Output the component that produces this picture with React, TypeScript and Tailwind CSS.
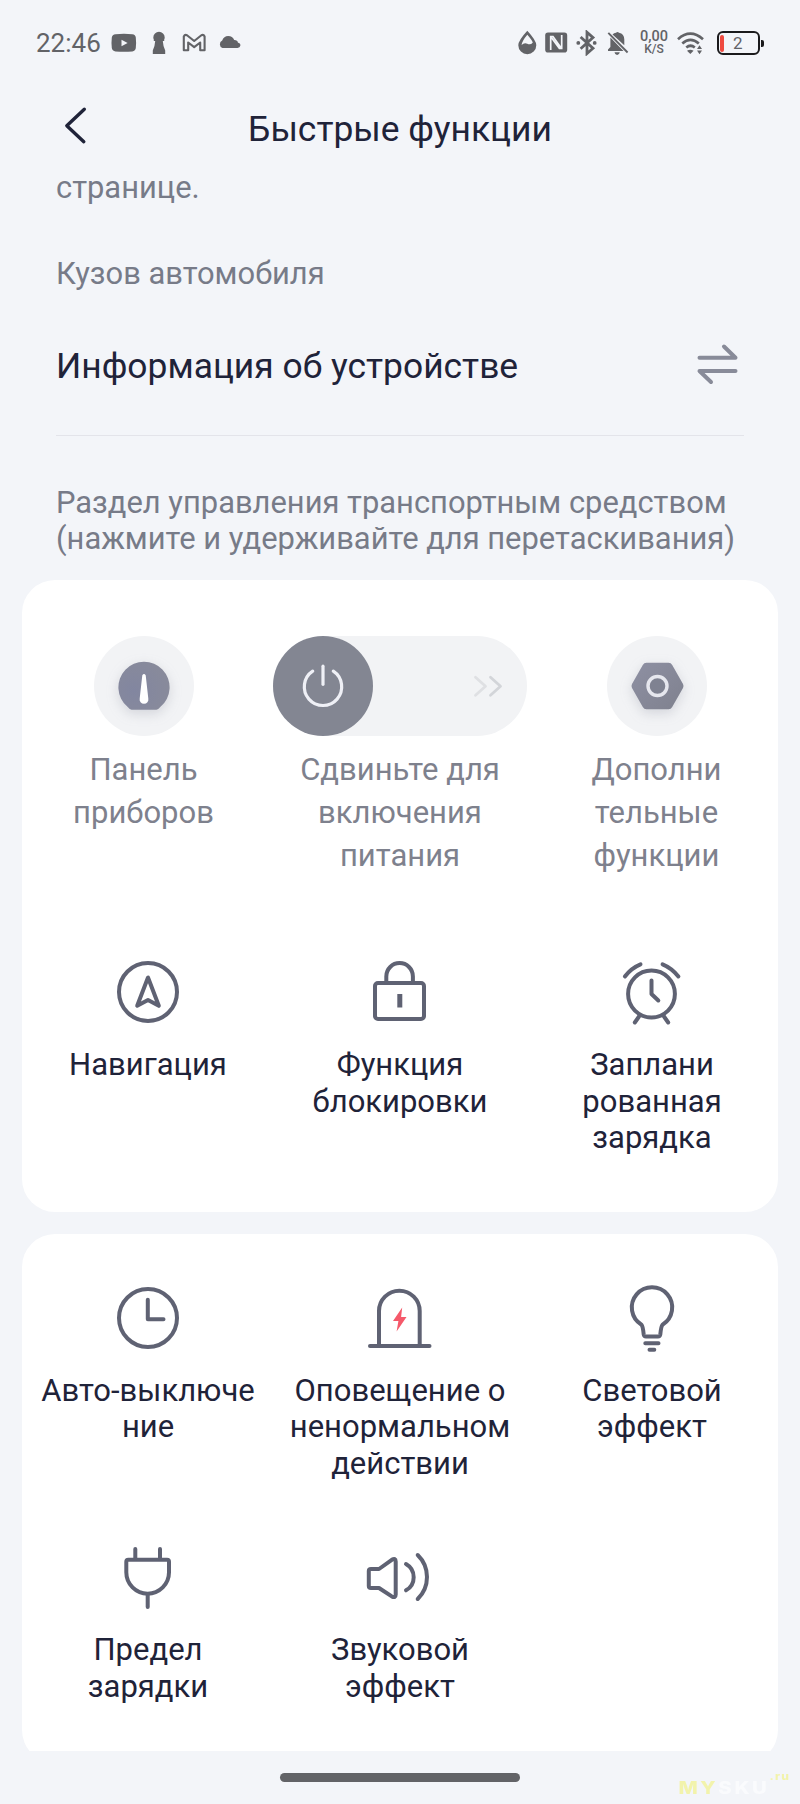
import { ReactNode } from 'react'

type Feature = { icon: ReactNode; lines: string[] }

function Glyph({ children }: { children: ReactNode }) {
  return (
    <svg className="w-16 h-16 overflow-visible" viewBox="0 0 64 64" fill="none" stroke="#5f6273" strokeWidth="4" strokeLinecap="round" strokeLinejoin="round">
      {children}
    </svg>
  )
}

const control: Feature[] = [
  {
    icon: (
      <Glyph>
        <circle cx="32" cy="32" r="29" />
        <path d="M32 17.5L21.2 45.8L32 40L42.8 45.8Z" />
      </Glyph>
    ),
    lines: ['Навигация'],
  },
  {
    icon: (
      <Glyph>
        <rect x="7" y="23" width="49" height="36" rx="3" />
        <path d="M18.3 22v-5.6a13.2 13.2 0 0 1 26.6 0V22" />
        <path d="M31.8 36.5v8.5" strokeWidth="5" strokeLinecap="square" strokeLinejoin="miter" />
      </Glyph>
    ),
    lines: ['Функция', 'блокировки'],
  },
  {
    icon: (
      <Glyph>
        <circle cx="31.5" cy="34" r="23.4" />
        <path d="M31.5 20.5V34l6.8 6.5" />
        <path d="M4.9 16.5Q11 8.2 20.5 4.3M42.6 4.3Q52 8.2 58.4 16.5" />
        <path d="M19 56.5l-4.2 6M44 56.5l4.2 6" />
      </Glyph>
    ),
    lines: ['Заплани', 'рованная', 'зарядка'],
  },
]

const extra: Feature[] = [
  {
    icon: (
      <Glyph>
        <circle cx="32" cy="32" r="29" />
        <path d="M31.8 13.8V33.3H47.5" />
      </Glyph>
    ),
    lines: ['Авто-выключе', 'ние'],
  },
  {
    icon: (
      <Glyph>
        <path d="M11 60V25a20.35 20.35 0 0 1 40.7 0V60" />
        <path d="M2 60H61.5" />
        <path d="M34.2 21.5L25 35h5.4l-1.8 10.5L38.5 31h-5.4z" fill="#f5596a" stroke="none" />
      </Glyph>
    ),
    lines: ['Оповещение о', 'ненормальном', 'действии'],
  },
  {
    icon: (
      <Glyph>
        <path d="M21.5 38.7A20.2 20.2 0 1 1 42.5 38.7C41 40.5 40.8 43 40.3 48.5Q40 50.5 38 50.5H26Q24 50.5 23.7 48.5C23.2 43 23 40.5 21.5 38.7Z" />
        <path d="M25.3 57.3H38.5M29.5 63.8H34.3" />
      </Glyph>
    ),
    lines: ['Световой', 'эффект'],
  },
  {
    icon: (
      <Glyph>
        <path d="M12.3 14.7H51a2 2 0 0 1 2 2V27.3a21.35 21.35 0 0 1-42.7 0V16.7a2 2 0 0 1 2-2Z" />
        <path d="M19.3 4V14M44 4V14M31.7 49V62" />
      </Glyph>
    ),
    lines: ['Предел', 'зарядки'],
  },
  {
    icon: (
      <Glyph>
        <path d="M3 24H11L23.8 14.8Q27.7 12.4 27.7 16.5V49.5Q27.7 53.5 23.8 51.4L11 43H3Q.8 43 .8 41V26Q.8 24 3 24Z" />
        <path d="M38 19a15.1 15.1 0 0 1 0 26.3M49.7 10a30.7 30.7 0 0 1 0 44" />
      </Glyph>
    ),
    lines: ['Звуковой', 'эффект'],
  },
]

function FeatureCell({ icon, lines }: Feature) {
  return (
    <div className="flex flex-col items-center">
      {icon}
      <div className="mt-[23px] text-center text-[31px] leading-[36.5px] text-[#1f2339]">
        {lines.map((line) => (
          <div key={line} className="whitespace-nowrap">{line}</div>
        ))}
      </div>
    </div>
  )
}

function TopLabel({ lines }: { lines: string[] }) {
  return (
    <div className="mt-[12px] text-center text-[31px] leading-[43px] text-[#7e818d]">
      {lines.map((line) => (
        <div key={line}>{line}</div>
      ))}
    </div>
  )
}

function StatusBar() {
  return (
    <div className="flex h-[86px] items-center pl-9 pr-9 text-[#626367]">
      <span className="w-[75px] text-[26px] leading-none">22:46</span>
      <svg className="h-[26px] w-[26px]" viewBox="0 0 26 26" fill="currentColor">
        <path fillRule="evenodd" d="M4.5 4.3Q13 3.3 21.3 4.3Q24.5 4.6 24.8 7.5Q25.4 13 24.8 18Q24.5 21 21.3 21.4Q13 22.2 4.5 21.4Q1.2 21 .8 18Q.2 13 .8 7.5Q1.2 4.6 4.5 4.3ZM10.5 9.8V16.2L16.6 13Z" />
      </svg>
      <svg className="ml-[15px] h-[26px] w-[14px]" viewBox="0 0 14 26" fill="currentColor">
        <path d="M7 1.8a5.7 5.7 0 0 1 5.7 5.7q0 1-.5 2V11H10.8q.4 6 2.4 9.5V24H.8V20.5Q2.8 17 3.2 11H1.8V9.5q-.5-1-.5-2A5.7 5.7 0 0 1 7 1.8Z" />
      </svg>
      <svg className="ml-[16px] h-[26px] w-[24px]" viewBox="0 0 24 26" fill="none" stroke="currentColor" strokeWidth="2.1" strokeLinejoin="round">
        <path d="M1.8 6.5Q2.8 4.3 5 5.2L12.2 11L19.4 5.2Q21.6 4.3 22.6 6.5V20.2H18.2V12.5L12.2 17.2L6.2 12.5V20.2H1.8Z" />
      </svg>
      <svg className="ml-[12px] h-[26px] w-[23px]" viewBox="0 0 23 26" fill="currentColor">
        <path d="M4.5 18A4 4 0 0 1 4.2 10.6Q5.8 6 10.2 6Q14.6 6 16.2 10Q19.5 9.9 20 12.8Q22.6 13.2 22.4 15.6Q22 18 19.5 18Z" />
      </svg>
      <div className="grow" />
      <svg className="h-[26px] w-[19px]" viewBox="0 0 19 26" fill="currentColor">
        <path fillRule="evenodd" d="M9.3 .8Q18.3 10.5 18.3 15.3A9 8.9 0 0 1 .3 15.3Q.3 10.5 9.3 .8ZM9.3 4.8Q4 11 3.6 15Q6.3 12.3 9.3 13.8Q12.5 15.4 14.8 12.5Q13.5 9.5 9.3 4.8Z" />
      </svg>
      <svg className="ml-[8px] h-[26px] w-[23px]" viewBox="0 0 23 26">
        <rect x=".2" y="2.6" width="22" height="20" rx="2.8" fill="currentColor" />
        <path d="M5.7 20V6.5H8L16.5 18.5M16.7 5V18.3H14.4L6 7" fill="none" stroke="#f3f5f9" strokeWidth="1.7" />
      </svg>
      <svg className="ml-[8px] h-[26px] w-[22px]" viewBox="0 0 22 26" fill="none" stroke="currentColor" strokeWidth="2.8">
        <path d="M4.6 7L17 18.2L11 23.5V2.3L17 7.6L4.6 18.8" />
        <circle cx="2.3" cy="12.9" r="1.9" fill="currentColor" stroke="none" />
        <circle cx="18.7" cy="12.9" r="1.9" fill="currentColor" stroke="none" />
      </svg>
      <svg className="ml-[9px] h-[26px] w-[22px]" viewBox="0 0 22 26" fill="currentColor">
        <path d="M5.5 4.5Q7 3 9 2.8Q10.5 1.3 12 2.8Q17.3 4 17.3 9.5V15.2Z" />
        <path d="M3.4 7.5L16.5 21H1V19.5L3.4 17Z" />
        <path d="M1.3 2.8L20.6 22.5" fill="none" stroke="currentColor" strokeWidth="1.9" />
        <path d="M7.5 22.3H12.8Q12.3 25 10.1 25Q8 25 7.5 22.3Z" />
      </svg>
      <div className="ml-[8px] flex w-[34px] flex-col items-center font-medium">
        <span className="text-[14.5px] leading-[13px]">0,00</span>
        <span className="text-[12px] leading-[13px]">K/S</span>
      </div>
      <svg className="ml-[6px] h-[26px] w-[28px]" viewBox="0 0 28 26" fill="none" stroke="currentColor" strokeWidth="2.7">
        <path d="M1 9.2Q13.3-1.8 26 9.2M5.3 13.5Q13.4 6.2 21.8 13.5M9.3 17.5Q13.5 14 17.8 17.5" />
        <path d="M10 20.8Q13.3 18.6 16.6 20.8L13.3 24Z" fill="currentColor" stroke="none" />
        <path d="M22.5 15.3L25 19H20ZM22.5 24.3L25 20.6H20Z" fill="currentColor" stroke="none" />
      </svg>
      <div className="ml-[12px] flex h-6 w-[43px] items-center rounded-[6px] border-2 border-[#1a1a1c] pl-[1px]">
        <div className="h-[17px] w-1 rounded-[2px] bg-[#ef4a40]" />
        <span className="ml-[9px] text-[17px] leading-none">2</span>
      </div>
      <div className="ml-px h-[7px] w-[3px] rounded-r-[2px] bg-[#1a1a1c]" />
    </div>
  )
}

function Dashboard() {
  return (
    <div className="flex flex-col items-center">
      <div className="h-[100px] w-[100px] rounded-full bg-[#f2f3f5]">
        <svg className="drop-shadow-[0_4px_6px_rgba(133,136,155,0.28)]" viewBox="0 0 100 100">
          <defs>
            <radialGradient id="dial" cx="0.3" cy="0.6" r="0.8">
              <stop offset="0" stopColor="#8286a0" />
              <stop offset="1" stopColor="#898b9a" />
            </radialGradient>
          </defs>
          <path d="M37.5 73.7Q35.8 73.7 33.5 70.8A25.6 25.6 0 1 1 66.5 70.8Q64.2 73.7 62.5 73.7Z" fill="url(#dial)" />
          <path d="M48.3 39.2Q50 36.8 51.7 39.2L54.3 62.5A4.4 4.4 0 1 1 45.7 62.5Z" fill="#fff" />
        </svg>
      </div>
      <TopLabel lines={['Панель', 'приборов']} />
    </div>
  )
}

function PowerSlider() {
  return (
    <div className="flex flex-col items-center">
      <div className="flex h-[100px] w-[254px] items-center justify-between rounded-full bg-[#f2f3f5] pr-6">
        <div className="h-[100px] w-[100px] rounded-full bg-[#838692]">
          <svg viewBox="0 0 100 100" fill="none" stroke="#eff0f6" strokeWidth="3.2" strokeLinecap="round">
            <path d="M39.7 35.2A18.7 18.7 0 1 0 60.3 35.2" />
            <path d="M50 30.2V48.3" />
          </svg>
        </div>
        <svg className="h-6 w-8" viewBox="0 0 32 24" fill="none" strokeWidth="2.8" strokeLinecap="round" strokeLinejoin="round">
          <path d="M4.5 3.2L14.5 12.2L4.5 21.2" stroke="#dfe0e3" />
          <path d="M19.5 3.2L29.5 12.2L19.5 21.2" stroke="#d3d5d9" />
        </svg>
      </div>
      <TopLabel lines={['Сдвиньте для', 'включения', 'питания']} />
    </div>
  )
}

function MoreFunctions() {
  return (
    <div className="flex flex-col items-center">
      <div className="h-[100px] w-[100px] rounded-full bg-[#f2f3f5]">
        <svg className="drop-shadow-[0_4px_6px_rgba(133,136,155,0.28)]" viewBox="0 0 100 100">
          <defs>
            <linearGradient id="nut" x1="0" y1="0" x2="1" y2="1">
              <stop offset="0" stopColor="#8e90a3" />
              <stop offset="1" stopColor="#7f818e" />
            </linearGradient>
          </defs>
          <path d="M39.5 26.7H61.5Q64 26.7 65.2 28.9L76 48Q77 50 76 52L65.2 71Q64 73.2 61.5 73.2H39.5Q37 73.2 35.8 71L25 52Q24 50 25 48L35.8 28.9Q37 26.7 39.5 26.7Z" fill="url(#nut)" />
          <circle cx="50.5" cy="50" r="9.5" fill="#7f8291" stroke="#e6e7ee" strokeWidth="3.4" />
        </svg>
      </div>
      <TopLabel lines={['Дополни', 'тельные', 'функции']} />
    </div>
  )
}

export default function App() {
  return (
    <div className="relative flex h-[1804px] w-[800px] flex-col overflow-hidden bg-[#f3f5f9] font-[Roboto,sans-serif]">
      <StatusBar />
      <header className="flex h-[84px] items-center pl-[64px]">
        <svg className="mb-1 h-10 w-6" viewBox="0 0 24 40" fill="none" stroke="#1f2339" strokeWidth="3.4" strokeLinecap="round" strokeLinejoin="round">
          <path d="M20.3 3.2L2.8 19.7L19.8 35.7" />
        </svg>
        <h1 className="grow pr-[88px] pt-[2px] text-center text-[35.4px] leading-[44px] text-[#1f2339]">Быстрые функции</h1>
      </header>

      <main className="h-[1581px] overflow-hidden">
        <div className="px-14 text-[30.9px] leading-9 text-[#777b88]">
          <p>странице.</p>
          <p className="mt-[50px]">Кузов автомобиля</p>
          <div className="mt-[52px] flex h-[92px] items-start justify-between border-b border-[#e3e4ea] pr-[5px]">
            <span className="text-[35.4px] leading-[44px] text-[#1f2339]">Информация об устройстве</span>
            <svg className="-mt-[1px] h-[42px] w-[42px]" viewBox="0 0 42 42" fill="none" stroke="#888b99" strokeWidth="4" strokeLinecap="round" strokeLinejoin="round">
              <path d="M2.5 14.7H38.5L27 3.5" />
              <path d="M38.5 28H2.5L14 39" />
            </svg>
          </div>
          <p className="mt-[49px] whitespace-nowrap">
            Раздел управления транспортным средством
            <br />
            (нажмите и удерживайте для перетаскивания)
          </p>
        </div>

        <section className="mx-[22px] mt-[23px] rounded-[33px] bg-white pb-[55.5px] pt-[56px]">
          <div className="grid grid-cols-[243px_270px_243px]">
            <Dashboard />
            <PowerSlider />
            <MoreFunctions />
          </div>
          <div className="mt-[83px] grid grid-cols-3">
            {control.map((f) => (
              <FeatureCell key={f.lines[0]} {...f} />
            ))}
          </div>
        </section>

        <section className="mx-[22px] mt-[22px] rounded-[33px] bg-white pb-[58px] pt-[51.5px]">
          <div className="grid grid-cols-3 gap-y-[63px]">
            {extra.map((f) => (
              <FeatureCell key={f.lines[0]} {...f} />
            ))}
          </div>
        </section>
      </main>

      <footer className="flex grow justify-center pt-[22px]">
        <div className="h-[9px] w-60 rounded-full bg-[#626367]" />
      </footer>

      {/* site mark laid over the corner */}
      <div className="absolute bottom-[6px] right-[10px] flex origin-right scale-x-120 items-start font-[Inter,sans-serif] font-extrabold">
        <span className="pt-[6px] text-[17px] leading-[20px] tracking-[2.2px]">
          <span className="text-[#f2f3ac]">MY</span>
          <span className="text-[#fafbfd]">SKU</span>
        </span>
        <span className="text-[10px] leading-[8px] tracking-[1px] text-[#f2f3ac]">.ru</span>
      </div>
    </div>
  )
}
